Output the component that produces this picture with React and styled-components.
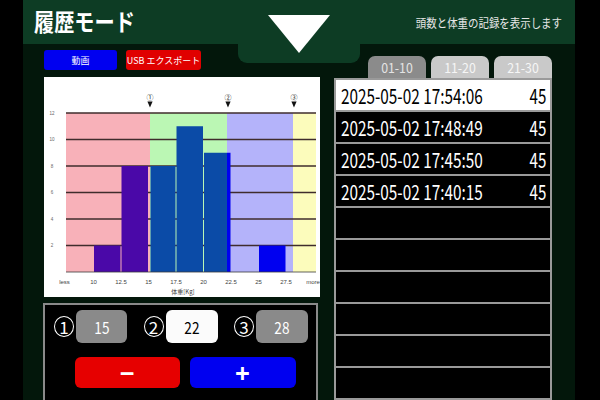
import React from 'react';
import styled, { createGlobalStyle } from 'styled-components';

const Global = createGlobalStyle`
  html, body { margin: 0; padding: 0; background: #000; }
  body { font-family: "Noto Sans CJK JP", "Noto Sans", sans-serif; }
  #root { width: 600px; height: 400px; overflow: hidden; }
  * { box-sizing: border-box; }
`;

const Screen = styled.div`
  width: 600px;
  height: 400px;
  display: flex;
  background: #000;
  overflow: hidden;
`;

const Gutter = styled.div`
  width: ${p => p.$w}px;
  flex: none;
  background: #000;
`;

const Panel = styled.div`
  position: relative;
  width: 552px;
  flex: none;
  display: flex;
  flex-direction: column;
  background: #03170b;
`;

const Header = styled.header`
  height: 44px;
  flex: none;
  background: #0d3c24;
  display: flex;
  align-items: center;
  justify-content: space-between;
  padding: 0 13px 0 11px;
`;

const Title = styled.h1`
  margin: 0;
  font-size: 24px;
  font-weight: 700;
  color: #fff;
  line-height: 1;
  white-space: nowrap;
  transform: scaleX(0.84);
  transform-origin: left center;
  margin-top: -2px;
`;

const Hint = styled.div`
  font-size: 12px;
  color: #e6e6e6;
  line-height: 1;
  white-space: nowrap;
  transform: scaleX(0.87);
  transform-origin: right center;
  margin-top: 2px;
`;

const PullTab = styled.div`
  position: absolute;
  left: 215px;
  top: 0;
  width: 122px;
  height: 63px;
  background: #0d3c24;
  border-radius: 0 0 9px 9px;
  display: flex;
  justify-content: center;
  padding-top: 15px;
`;

const Body = styled.div`
  flex: 1;
  min-height: 0;
  display: grid;
  grid-template-columns: 276px 218px;
  column-gap: 14px;
  padding-left: 21px;
`;

const LeftCol = styled.div`
  display: flex;
  flex-direction: column;
  padding-top: 6px;
`;

const ActionRow = styled.div`
  display: flex;
  gap: 9px;
  height: 20px;
`;

const ActionButton = styled.button`
  width: ${p => p.$w}px;
  height: 20px;
  border: none;
  border-radius: 3px;
  background: ${p => p.$bg};
  color: #fff;
  font-family: inherit;
  font-size: 9px;
  padding: 0;
  display: flex;
  align-items: center;
  justify-content: center;
  white-space: nowrap;
`;

const ChartBox = styled.div`
  margin-top: 7px;
  width: 276px;
  height: 220px;
  background: #fff;
`;

const Control = styled.div`
  margin-top: 6px;
  margin-left: -1px;
  width: 275px;
  flex: 1;
  border: 2px solid #8a8a8a;
  border-bottom: none;
  background: #000;
  padding: 5px 8px 0 9px;
  display: flex;
  flex-direction: column;
`;

const ThresholdRow = styled.div`
  display: flex;
  justify-content: space-between;
  align-items: center;
  height: 33px;
`;

const Threshold = styled.div`
  display: flex;
  align-items: center;
  gap: 2px;
`;

const CircleNum = styled.span`
  width: 20px;
  height: 21px;
  border: 1.5px solid #fff;
  border-radius: 50%;
  color: #fff;
  font-size: 17px;
  line-height: 1;
  display: flex;
  align-items: center;
  justify-content: center;
`;

const ValueBox = styled.div`
  width: ${p => p.$w}px;
  height: 33px;
  border-radius: 6px;
  background: ${p => (p.$active ? '#fbfbfb' : '#8a8a8a')};
  color: ${p => (p.$active ? '#000' : '#fff')};
  display: flex;
  align-items: center;
  justify-content: center;
`;

const ValueText = styled.span`
  font-size: 16px;
  line-height: 1;
  transform: scaleX(0.85);
`;

const StepRow = styled.div`
  margin-top: 14px;
  display: flex;
  justify-content: center;
  gap: 10px;
  padding-left: 8px;
`;

const StepButton = styled.button`
  width: ${p => p.$w}px;
  height: 31px;
  border: none;
  border-radius: 6px;
  background: ${p => p.$bg};
  color: #fff;
  font-family: "Noto Sans", sans-serif;
  font-weight: 700;
  font-size: 26px;
  line-height: 1;
  padding: 0;
  display: flex;
  align-items: center;
  justify-content: center;
`;

const RightCol = styled.div`
  display: flex;
  flex-direction: column;
  padding-top: 12px;
  min-height: 0;
`;

const Tabs = styled.div`
  display: flex;
  justify-content: flex-end;
  gap: 5px;
  height: 22px;
  flex: none;
`;

const Tab = styled.div`
  width: 58px;
  height: 22px;
  border-radius: 7px 7px 0 0;
  background: ${p => (p.$active ? '#8b8b8b' : '#c9c9c9')};
  color: ${p => (p.$active ? '#e4e4e4' : '#f6f6f6')};
  display: flex;
  align-items: center;
  justify-content: center;
`;

const TabText = styled.span`
  font-size: 14px;
  line-height: 1;
  transform: scaleX(0.88);
`;

const List = styled.div`
  flex: 1;
  border: 2px solid #9a9a9a;
  border-bottom: none;
  display: flex;
  flex-direction: column;
  overflow: hidden;
`;

const Row = styled.div`
  height: 32px;
  flex: none;
  border-bottom: 2px solid #9a9a9a;
  background: ${p => (p.$selected ? '#fff' : '#000')};
  color: ${p => (p.$selected ? '#000' : '#fff')};
  display: flex;
  align-items: center;
  padding: 0 4px 0 5px;
`;

const DateText = styled.span`
  flex: 0 0 150px;
  min-width: 0;
  font-size: 21px;
  line-height: 1;
  white-space: nowrap;
  transform: scaleX(0.73);
  transform-origin: left center;
`;

const CountText = styled.span`
  margin-left: auto;
  flex: none;
  font-size: 21px;
  line-height: 1;
  transform: scaleX(0.72);
  transform-origin: right center;
`;

/* ---------- chart ---------- */
const X0 = 22;
const STEP = 27.5;
const YB = 195;
const UNIT = 13.25;
const PLOT_R = 272;

const zones = [
  { a: 22, b: 106, bg: '#f8b1b9', bar: '#4a08a8' },
  { a: 106, b: 183, bg: '#bbf7b4', bar: '#0b4ba7' },
  { a: 183, b: 249, bg: '#b4b3fa', bar: '#0000f0' },
  { a: 249, b: 272, bg: '#fcfcbc', bar: '#0000f0' },
];

const bars = [
  { a: 49.5, b: 77, h: 2 },
  { a: 77, b: 104.5, h: 8 },
  { a: 106, b: 132, h: 8 },
  { a: 132, b: 159.5, h: 11 },
  { a: 159.5, b: 187, h: 9 },
  { a: 214.5, b: 242, h: 2 },
];

const xLabels = ['less', '10', '12.5', '15', '17.5', '20', '22.5', '25', '27.5', 'more'];
const markers = [
  { x: 106, t: '①' },
  { x: 184, t: '②' },
  { x: 250, t: '③' },
];

function Chart() {
  const segs = [];
  bars.forEach((bar, i) => {
    const a = bar.a + 0.5;
    const b = bar.b - 0.5;
    const y = YB - bar.h * UNIT;
    zones.forEach((z, j) => {
      const s = Math.max(a, z.a);
      const e = Math.min(b, z.b);
      if (e > s) {
        segs.push(<rect key={`${i}-${j}`} x={s} y={y} width={e - s} height={YB - y} fill={z.bar} />);
      }
    });
  });
  return (
    <svg width="276" height="220" viewBox="0 0 276 220">
      {zones.map((z, i) => (
        <rect key={i} x={z.a} y={YB - 12 * UNIT} width={z.b - z.a} height={12 * UNIT} fill={z.bg} />
      ))}
      {[2, 4, 6, 8, 10, 12].map(v => (
        <line key={v} x1={X0} x2={PLOT_R} y1={YB - v * UNIT} y2={YB - v * UNIT} stroke="#3f2c2c" strokeWidth="1.5" />
      ))}
      {segs}
      <line x1={X0} x2={PLOT_R} y1={YB} y2={YB} stroke="#3a3a3a" strokeWidth="0.8" />
      {[2, 4, 6, 8, 10, 12].map(v => (
        <text key={v} x="8" y={YB - v * UNIT + 1.5} fontSize="4.5" fill="#666" textAnchor="middle" fontFamily="Liberation Sans, sans-serif">{v}</text>
      ))}
      {xLabels.map((l, i) => {
        let x = X0 + i * STEP;
        if (i === 0) x = 20.5;
        if (i === 9) x = 269;
        return (
          <text key={l} x={x} y="206.5" fontSize="6" fill="#444" textAnchor="middle" fontFamily="Liberation Sans, sans-serif">{l}</text>
        );
      })}
      <text x="139" y="217" fontSize="6" fill="#444" textAnchor="middle" fontFamily="Noto Sans CJK JP, sans-serif">体重[Kg]</text>
      {markers.map(m => (
        <g key={m.t}>
          <text x={m.x} y="22.5" fontSize="7" fill="#111" textAnchor="middle" fontFamily="Noto Sans CJK JP, sans-serif">{m.t}</text>
          <polygon points={`${m.x - 2.6},24.5 ${m.x + 2.6},24.5 ${m.x},30.5`} fill="#111" />
        </g>
      ))}
    </svg>
  );
}

const records = [
  { t: '2025-05-02 17:54:06', n: 45 },
  { t: '2025-05-02 17:48:49', n: 45 },
  { t: '2025-05-02 17:45:50', n: 45 },
  { t: '2025-05-02 17:40:15', n: 45 },
];

export default function App() {
  const rows = [...records, ...Array.from({ length: 6 }, () => null)];
  return (
    <>
      <Global />
      <Screen>
        <Gutter $w={23} />
        <Panel>
          <Header>
            <Title>履歴モード</Title>
            <Hint>頭数と体重の記録を表示します</Hint>
          </Header>
          <Body>
            <LeftCol>
              <ActionRow>
                <ActionButton $w={73} $bg="#0000f0">動画</ActionButton>
                <ActionButton $w={75} $bg="#e00000">USB エクスポート</ActionButton>
              </ActionRow>
              <ChartBox>
                <Chart />
              </ChartBox>
              <Control>
                <ThresholdRow>
                  <Threshold>
                    <CircleNum>1</CircleNum>
                    <ValueBox $w={51}><ValueText>15</ValueText></ValueBox>
                  </Threshold>
                  <Threshold>
                    <CircleNum>2</CircleNum>
                    <ValueBox $w={52} $active><ValueText>22</ValueText></ValueBox>
                  </Threshold>
                  <Threshold>
                    <CircleNum>3</CircleNum>
                    <ValueBox $w={52}><ValueText>28</ValueText></ValueBox>
                  </Threshold>
                </ThresholdRow>
                <StepRow>
                  <StepButton $w={105} $bg="#e60000">−</StepButton>
                  <StepButton $w={106} $bg="#0000f0">+</StepButton>
                </StepRow>
              </Control>
            </LeftCol>
            <RightCol>
              <Tabs>
                <Tab $active><TabText>01-10</TabText></Tab>
                <Tab><TabText>11-20</TabText></Tab>
                <Tab><TabText>21-30</TabText></Tab>
              </Tabs>
              <List>
                {rows.map((r, i) => (
                  <Row key={i} $selected={i === 0}>
                    {r && <DateText>{r.t}</DateText>}
                    {r && <CountText>{r.n}</CountText>}
                  </Row>
                ))}
              </List>
            </RightCol>
          </Body>
          <PullTab>
            <svg width="62" height="38" viewBox="0 0 62 38">
              <polygon points="0,0 62,0 31,38" fill="#fff" />
            </svg>
          </PullTab>
        </Panel>
        <Gutter $w={25} />
      </Screen>
    </>
  );
}
